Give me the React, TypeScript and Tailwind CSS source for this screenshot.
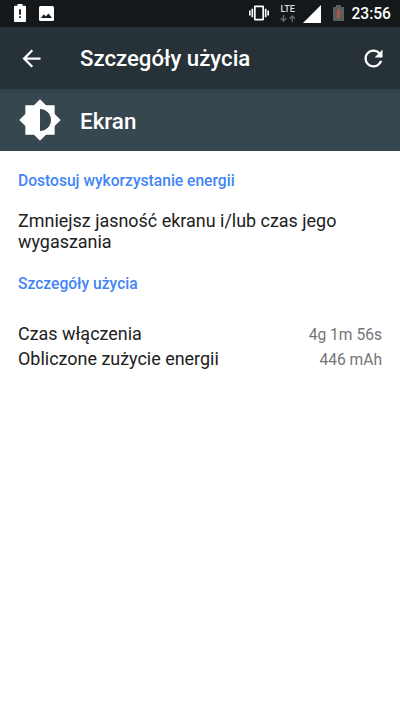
import React from 'react';

interface IconProps {
  className?: string;
}

const BatteryAlertIcon: React.FC<IconProps> = ({ className }) => (
  <svg viewBox="0 0 12 18" className={className} fill="none">
    <path fill="#fff" d="M3.500 0h5v1.700H11q1 0 1 1V17q0 1-1 1H1q-1 0-1-1V2.700q0-1 1-1h2.500z" />
    <path fill="#14181b" d="M5.100 5.300h1.800v5.500H5.100zM5.100 12.200h1.800v1.800H5.100z" />
  </svg>
);

const ImageIcon: React.FC<IconProps> = ({ className }) => (
  <svg viewBox="0 0 15 15" className={className}>
    <rect width="15" height="15" rx="1.500" fill="#fff" />
    <path fill="#14181b" d="M2 12l2.800-3.700 2 2.300L9.500 7.400 13 12z" />
  </svg>
);

const VibrateIcon: React.FC<IconProps> = ({ className }) => (
  <svg viewBox="0 0 24 24" className={className} fill="#fff">
    <path d="M0 15h2V9H0v6zm3 2h2V7H3v10zm19-8v6h2V9h-2zm-3 8h2V7h-2v10zM16.500 3h-9C6.670 3 6 3.670 6 4.500v15c0 .83.67 1.500 1.500 1.500h9c.83 0 1.500-.67 1.500-1.500v-15c0-.83-.67-1.500-1.500-1.500zM16 19H8V5h8v14z" />
  </svg>
);

const DataArrowsIcon: React.FC<IconProps> = ({ className }) => (
  <svg viewBox="0 0 16 7" className={className} fill="none" stroke="#66696b" strokeWidth="1.400">
    <path d="M3.500 0v6M.8 3.300l2.700 2.700 2.700-2.700M12.300 7V1M9.600 3.700L12.300 1 15 3.700" />
  </svg>
);

const SignalIcon: React.FC<IconProps> = ({ className }) => (
  <svg viewBox="0 0 18 18" className={className}>
    <path fill="#fff" d="M0 18L18 0v18z" />
  </svg>
);

const BatteryLowIcon: React.FC<IconProps> = ({ className }) => (
  <svg viewBox="0 0 11 16" className={className}>
    <path fill="#5b5d5e" d="M3 0h5v2h3v14H0V2h3z" />
    <path fill="#d2502f" d="M4.500 4.300h2v8.700h-2z" />
  </svg>
);

const BackIcon: React.FC<IconProps> = ({ className }) => (
  <svg viewBox="0 0 24 24" className={className} fill="#fff">
    <path d="M20 11H7.830l5.590-5.590L12 4l-8 8 8 8 1.410-1.410L7.830 13H20v-2z" />
  </svg>
);

const RefreshIcon: React.FC<IconProps> = ({ className }) => (
  <svg viewBox="0 0 24 24" className={className} fill="#fff">
    <path d="M17.650 6.350C16.200 4.900 14.210 4 12 4c-4.420 0-7.990 3.580-7.990 8s3.570 8 7.990 8c3.730 0 6.840-2.550 7.730-6h-2.080c-.82 2.330-3.040 4-5.650 4-3.310 0-6-2.690-6-6s2.690-6 6-6c1.660 0 3.140.69 4.220 1.780L13 11h7V4l-2.350 2.350z" />
  </svg>
);

const BrightnessIcon: React.FC<IconProps> = ({ className }) => (
  <svg viewBox="0 0 24 24" className={className} fill="#fff">
    <path d="M20 15.310L23.310 12 20 8.690V4h-4.690L12 .69 8.690 4H4v4.690L.69 12 4 15.310V20h4.690L12 23.310 15.310 20H20v-4.690zM12 18V6c3.310 0 6 2.690 6 6s-2.690 6-6 6z" />
  </svg>
);

const usage = [
  { label: 'Czas włączenia', value: '4g 1m 56s' },
  { label: 'Obliczone zużycie energii', value: '446 mAh' },
];

const StatusBar: React.FC = () => (
  <div className="flex h-[27px] items-start bg-[#14181b] pl-3.5">
    <BatteryAlertIcon className="mt-1 h-[18px] w-3" />
    <ImageIcon className="mt-[5.500px] ml-[13px] h-[15px] w-[15px]" />
    <div className="ml-auto flex items-start pr-[9px]">
      <VibrateIcon className="mt-[3px] h-5 w-5" />
      <div className="mt-1 ml-[11px] w-4">
        <div className="text-[9.200px] leading-[9px] font-medium text-[#dcdddd]">LTE</div>
        <DataArrowsIcon className="mt-0.5 h-[7px] w-4" />
      </div>
      <SignalIcon className="mt-[4.500px] ml-[7px] h-[18px] w-[18px]" />
      <BatteryLowIcon className="mt-[5px] ml-3 h-4 w-[11px]" />
      <span className="ml-[7px] text-[15.600px] leading-[29px] font-medium text-white">23:56</span>
    </div>
  </div>
);

export default function App() {
  return (
    <div className="h-[711px] w-[400px] overflow-hidden bg-white font-['Roboto','Noto_Sans',sans-serif] text-[#212121]">
      <StatusBar />

      <header className="flex h-[62px] items-center bg-[#263238] pr-[13px] pl-[17.500px]">
        <BackIcon className="h-[27px] w-[27px]" />
        <h1 className="ml-[35.500px] text-[22.200px] leading-[26px] font-medium text-white">Szczegóły użycia</h1>
        <RefreshIcon className="ml-auto h-[27px] w-[27px]" />
      </header>

      <div className="flex h-[62px] items-center bg-[#37474f] bg-linear-to-b from-[#303e45] to-[#37474f] to-[5px] pl-[18px]">
        <BrightnessIcon className="h-11 w-11" />
        <h2 className="ml-[18px] pt-0.5 text-[22.400px] leading-[26px] font-medium text-white">Ekran</h2>
      </div>

      <main className="px-[18px] pt-[21px]">
        <h3 className="text-[15.600px] leading-[18px] font-medium text-[#4285f4]">Dostosuj wykorzystanie energii</h3>
        <p className="mt-5 text-[17.950px] leading-[21px]">
          Zmniejsz jasność ekranu i/lub czas jego wygaszania
        </p>
        <h3 className="mt-[23px] text-[15.600px] leading-[18px] font-medium text-[#4285f4]">Szczegóły użycia</h3>

        <div className="mt-7">
          {usage.map((row) => (
            <div key={row.label} className="flex h-[25px] items-center justify-between">
              <span className="text-[17.950px] leading-[25px]">{row.label}</span>
              <span className="pt-1 text-[15.600px] leading-[25px] text-[#757575]">{row.value}</span>
            </div>
          ))}
        </div>
      </main>
    </div>
  );
}
